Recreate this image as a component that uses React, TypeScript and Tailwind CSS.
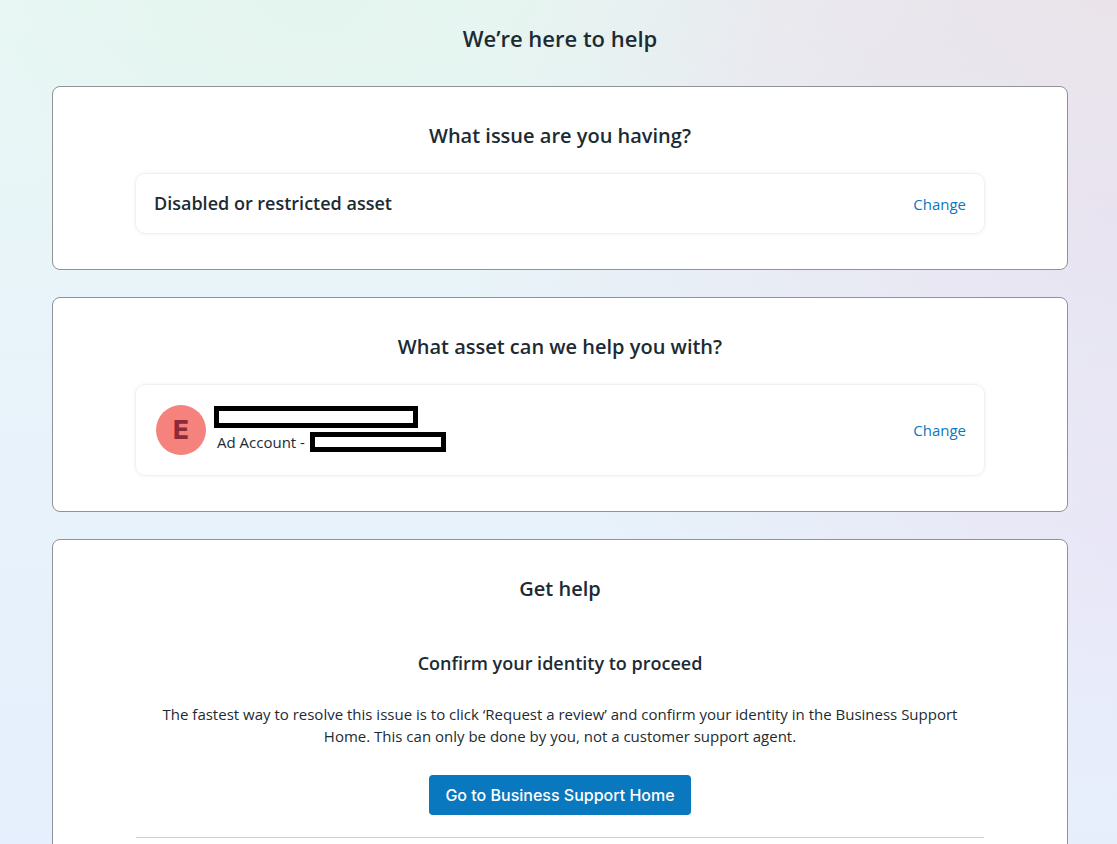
import type { ReactNode } from 'react';

function Card({ title, children }: { title: string; children: ReactNode }) {
  return (
    <section className="rounded-lg border border-[#8f9296] bg-white px-[82px] pt-[35px] pb-[35px]">
      <h2 className="text-center text-[20px] leading-[28px] font-semibold">{title}</h2>
      {children}
    </section>
  );
}

function Panel({ children, label }: { children: ReactNode; label: string }) {
  return (
    <div className="mt-[23px] flex items-center justify-between rounded-[10px] border border-[#f0f0f1] px-[18px] py-[16px] shadow-[0_0_4px_rgba(0,0,0,0.05)]">
      {children}
      <button type="button" aria-label={label} className="text-[15px] leading-[22px] text-[#0a78be]">
        Change
      </button>
    </div>
  );
}

export default function App() {
  return (
    <main
      className="h-screen overflow-hidden bg-[#e8f2fb] pr-[49px] pl-[52px] font-['Open_Sans',sans-serif] text-[#1c2b33] [background-image:radial-gradient(ellipse_40%_30%_at_28%_0%,#e4f4ee_0%,#e4f4ee00_100%),radial-gradient(ellipse_60%_30%_at_100%_0%,#eae3ea_0%,#eae3ea00_100%),radial-gradient(ellipse_60%_60%_at_100%_25%,#e8e3f1_0%,#e8e3f100_100%),radial-gradient(ellipse_35%_40%_at_100%_65%,#e9e9fa_0%,#e9e9fa00_100%),linear-gradient(to_bottom,#e9f8f5_0%,#e8f4f9_35%,#e6effd_100%)]"
    >
      <h1 className="pt-[22px] pb-[32px] text-center text-[22px] leading-[32px] font-semibold">We’re here to help</h1>
      <div className="flex flex-col gap-[27px]">
        <Card title="What issue are you having?">
          <Panel label="Change issue">
            <h3 className="text-[18px] leading-[27px] font-semibold">Disabled or restricted asset</h3>
          </Panel>
        </Card>

        <Card title="What asset can we help you with?">
          <Panel label="Change asset">
            <div className="flex items-center gap-2 py-[4px] pl-[2px]">
              <div className="flex size-[50px] items-center justify-center rounded-full bg-[#f5827d] font-[Inter,sans-serif] text-[26px] leading-none font-extrabold text-[#8d2a37]">
                E
              </div>
              <div className="flex flex-col gap-[4px] pb-[2px]">
                <div className="h-[22px] w-[204px] border-[5px] border-black" />
                <div className="flex h-[20px] items-center gap-[5px] pl-[3px] text-[15px] leading-[20px]">
                  Ad Account -
                  <span className="h-[20px] w-[136px] border-[5px] border-black" />
                </div>
              </div>
            </div>
          </Panel>
        </Card>

        <Card title="Get help">
          <h3 className="mt-[48px] text-center text-[18px] leading-[24px] font-semibold">
            Confirm your identity to proceed
          </h3>
          <p className="mt-[28px] px-[20px] text-center text-[15px] leading-[22px]">
            The fastest way to resolve this issue is to click ‘Request a review’ and confirm your identity in the
            Business Support Home. This can only be done by you, not a customer support agent.
          </p>
          <div className="mt-[28px] flex justify-center">
            <button
              type="button"
              className="h-[40px] rounded bg-[#0a78be] px-[16px] font-[Inter,sans-serif] text-[16px] font-medium text-white"
            >
              Go to Business Support Home
            </button>
          </div>
          <hr className="mx-px mt-[22px] border-[#ccd2d8]" />
        </Card>
      </div>
    </main>
  );
}
